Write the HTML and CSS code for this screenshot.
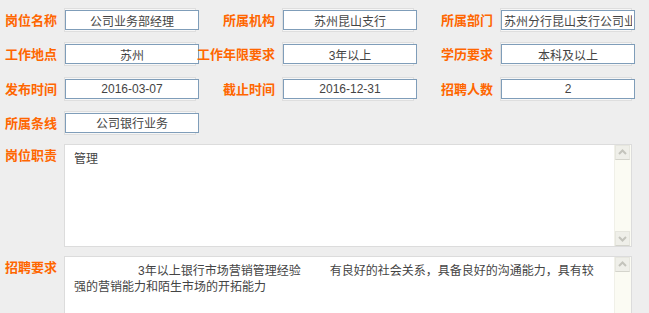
FILE: index.html
```html
<!DOCTYPE html>
<html lang="zh-CN">
<head>
    <meta charset="UTF-8">
    <title>岗位信息</title>
    <link rel="stylesheet" href="styles.css">
</head>
<body>
    <div class="info">
        <label class="lbl">岗位名称</label>
        <div class="field"><input type="text" value="公司业务部经理"></div>
        <label class="lbl">所属机构</label>
        <div class="field"><input type="text" value="苏州昆山支行"></div>
        <label class="lbl">所属部门</label>
        <div class="field"><input type="text" value="苏州分行昆山支行公司业务部"></div>

        <label class="lbl">工作地点</label>
        <div class="field"><input type="text" value="苏州"></div>
        <label class="lbl">工作年限要求</label>
        <div class="field"><input type="text" value="3年以上"></div>
        <label class="lbl">学历要求</label>
        <div class="field"><input type="text" value="本科及以上"></div>

        <label class="lbl">发布时间</label>
        <div class="field"><input type="text" value="2016-03-07"></div>
        <label class="lbl">截止时间</label>
        <div class="field"><input type="text" value="2016-12-31"></div>
        <label class="lbl">招聘人数</label>
        <div class="field"><input type="text" value="2"></div>

        <label class="lbl">所属条线</label>
        <div class="field"><input type="text" value="公司银行业务"></div>
    </div>

    <div class="block">
        <label class="lbl lbl-top">岗位职责</label>
        <div class="memo">
            <div class="memo-text">管理</div>
            <div class="scroll">
                <span class="btn"><svg width="15" height="15" viewBox="0 0 15 15"><polyline points="4,9 7.5,5.5 11,9" /></svg></span>
                <span class="track"></span>
                <span class="btn"><svg width="15" height="15" viewBox="0 0 15 15"><polyline points="4,6 7.5,9.5 11,6" /></svg></span>
            </div>
        </div>
    </div>

    <div class="block">
        <label class="lbl lbl-top">招聘要求</label>
        <div class="memo">
            <div class="memo-text"><span class="sp-lead"></span>3年以上银行市场营销管理经验<span class="sp-mid"></span>有良好的社会关系，具备良好的沟通能力，具有较<br>强的营销能力和陌生市场的开拓能力</div>
            <div class="scroll">
                <span class="btn"><svg width="15" height="15" viewBox="0 0 15 15"><polyline points="4,9 7.5,5.5 11,9" /></svg></span>
                <span class="track"></span>
                <span class="btn"><svg width="15" height="15" viewBox="0 0 15 15"><polyline points="4,6 7.5,9.5 11,6" /></svg></span>
            </div>
        </div>
    </div>
</body>
</html>
```

FILE: styles.css
```css
body {
    margin: 0;
    padding-top: 8px;
    background-color: #eeeeee;
    font-family: "Liberation Sans", "Noto Sans CJK SC", sans-serif;
    font-size: 12px;
    color: #333;
    overflow: hidden;
}
.info {
    display: grid;
    grid-template-columns: 64px 132px 86px 132px 86px 132px;
    grid-auto-rows: 24px;
    row-gap: 10.34px;
}
.lbl {
    font-family: "Noto Sans CJK SC", sans-serif;
    font-size: 13px;
    font-weight: bold;
    color: #ff6600;
    text-align: right;
    padding-right: 7px;
    line-height: 23px;
    white-space: nowrap;
}
.field {
    border: 1px solid #dedede;
    background-color: #f7f7f7;
    overflow: visible;
}
.field input {
    display: block;
    box-sizing: border-box;
    width: 134px;
    height: 20px;
    margin: 1px 0 0 0;
    padding: 0 2px;
    border: 1px solid #7f9db9;
    background-color: #fff;
    font-family: "Liberation Sans", "Noto Sans CJK SC", sans-serif;
    font-size: 12px;
    color: #444;
    text-align: center;
    outline: none;
}
.block {
    display: flex;
    margin-top: 9px;
}
.block .lbl {
    width: 57px;
    flex: none;
}
.lbl-top {
    line-height: 16px;
    padding-top: 3px;
}
.memo {
    display: flex;
    width: 566px;
    height: 101px;
    border: 1px solid #dcdcdc;
    background-color: #fff;
}
.memo-text {
    flex: 1;
    padding: 6px 9px;
    line-height: 16px;
    color: #444;
}
.sp-lead {
    display: inline-block;
    width: 64px;
}
.sp-mid {
    display: inline-block;
    width: 29px;
}
.scroll {
    display: flex;
    flex-direction: column;
    width: 16px;
    background-color: #fbfbf3;
    border-left: 1px solid #f0f0e8;
}
.btn {
    display: block;
    width: 15px;
    height: 15px;
    box-sizing: border-box;
    border: 1px solid #e6e6de;
    border-bottom-color: #d4d4cc;
    background-color: #efefe9;
}
.btn svg {
    display: block;
    margin: -1px;
}
.btn polyline {
    fill: none;
    stroke: #c4c4bc;
    stroke-width: 2;
}
.track {
    flex: 1;
}
```
